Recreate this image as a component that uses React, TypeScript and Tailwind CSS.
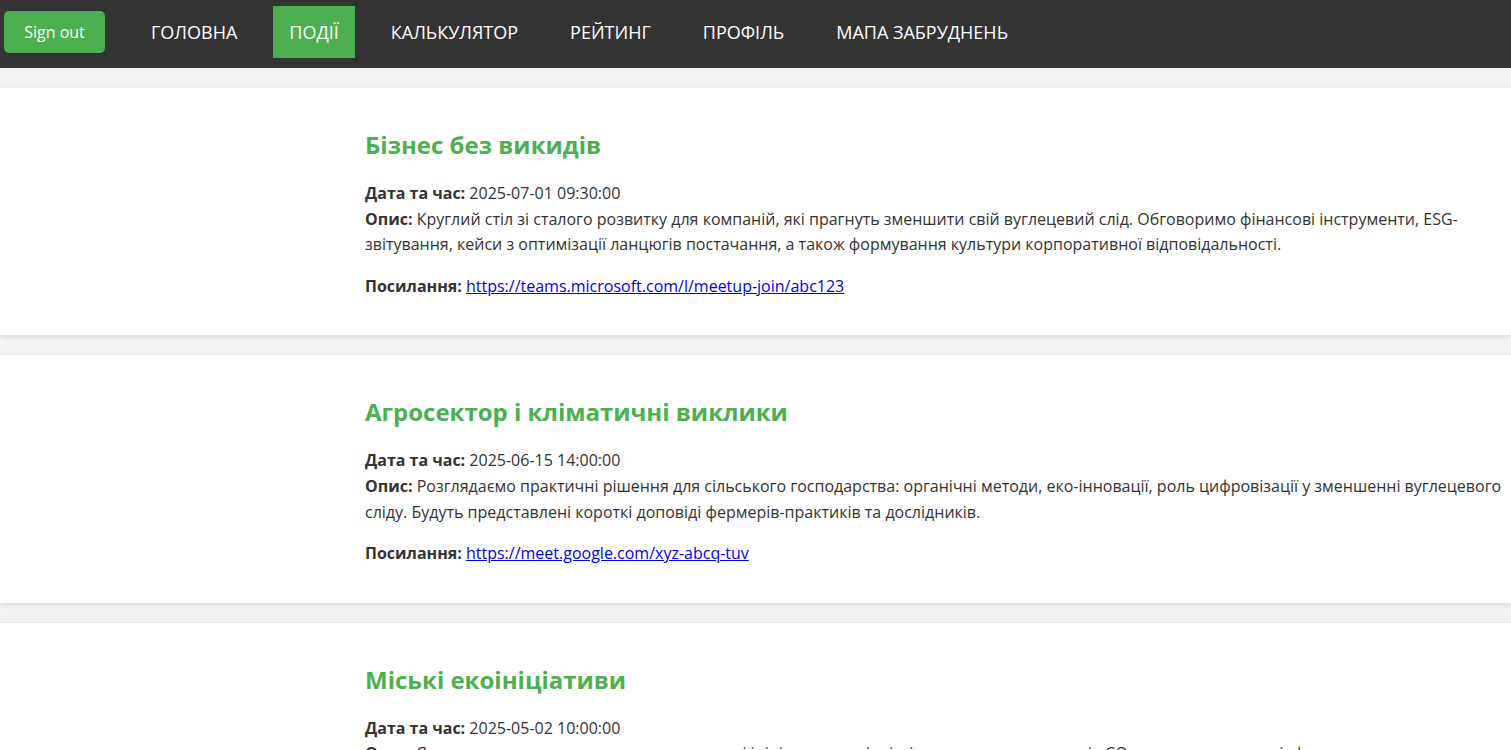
const navItems = ["ГОЛОВНА", "ПОДІЇ", "КАЛЬКУЛЯТОР", "РЕЙТИНГ", "ПРОФІЛЬ", "МАПА ЗАБРУДНЕНЬ"];

const events = [
  {
    title: "Бізнес без викидів",
    date: "2025-07-01 09:30:00",
    description:
      "Круглий стіл зі сталого розвитку для компаній, які прагнуть зменшити свій вуглецевий слід. Обговоримо фінансові інструменти, ESG-звітування, кейси з оптимізації ланцюгів постачання, а також формування культури корпоративної відповідальності.",
    link: "https://teams.microsoft.com/l/meetup-join/abc123",
  },
  {
    title: "Агросектор і кліматичні виклики",
    date: "2025-06-15 14:00:00",
    description:
      "Розглядаємо практичні рішення для сільського господарства: органічні методи, еко-інновації, роль цифровізації у зменшенні вуглецевого сліду. Будуть представлені короткі доповіді фермерів-практиків та дослідників.",
    link: "https://meet.google.com/xyz-abcq-tuv",
  },
  {
    title: "Міські екоініціативи",
    date: "2025-05-02 10:00:00",
    description:
      "Як громади можуть впроваджувати зелені ініціативи на рівні міста: зменшення викидів CO₂, озеленення, велоінфраструктура та роздільний збір відходів. Презентація успішних практик українських міст.",
    link: "https://zoom.us/j/1234567890",
  },
];

export default function App() {
  return (
    <div className="min-h-screen bg-[#f2f2f2] font-['Open_Sans',sans-serif] text-[#333]">
      {/* Top bar */}
      <nav className="flex h-[68px] items-start bg-[#333] px-1 pt-[6px]">
        <div className="flex h-[52px] items-center">
          <button className="h-[42px] w-[101px] rounded-[5px] bg-[#4CAF50] text-base text-white">Sign out</button>
        </div>
        <ul className="ml-[30px] flex gap-5">
          {navItems.map((item) => (
            <li key={item}>
              <a
                href="#"
                className={`block px-4 py-[14px] text-[18px] leading-[24px] text-white ${item === "ПОДІЇ" ? "bg-[#4CAF50]" : ""}`}
              >
                {item}
              </a>
            </li>
          ))}
        </ul>
      </nav>

      {/* Event list */}
      <main className="flex flex-col gap-5 pt-5">
        {events.map((ev) => (
          <section key={ev.title} className="bg-white py-5 pl-[365px] shadow-[0_2px_5px_rgba(0,0,0,0.1)]">
            <h2 className="my-5 text-2xl leading-[33px] font-bold text-[#4CAF50]">{ev.title}</h2>
            <p className="my-4 text-base leading-[1.6]">
              <strong>Дата та час:</strong> {ev.date}
              <br />
              <strong>Опис:</strong> {ev.description}
            </p>
            <p className="my-4 text-base leading-[1.6]">
              <strong>Посилання:</strong>{" "}
              <a href={ev.link} className="text-[#0000ee] underline">
                {ev.link}
              </a>
            </p>
          </section>
        ))}
      </main>
    </div>
  );
}
